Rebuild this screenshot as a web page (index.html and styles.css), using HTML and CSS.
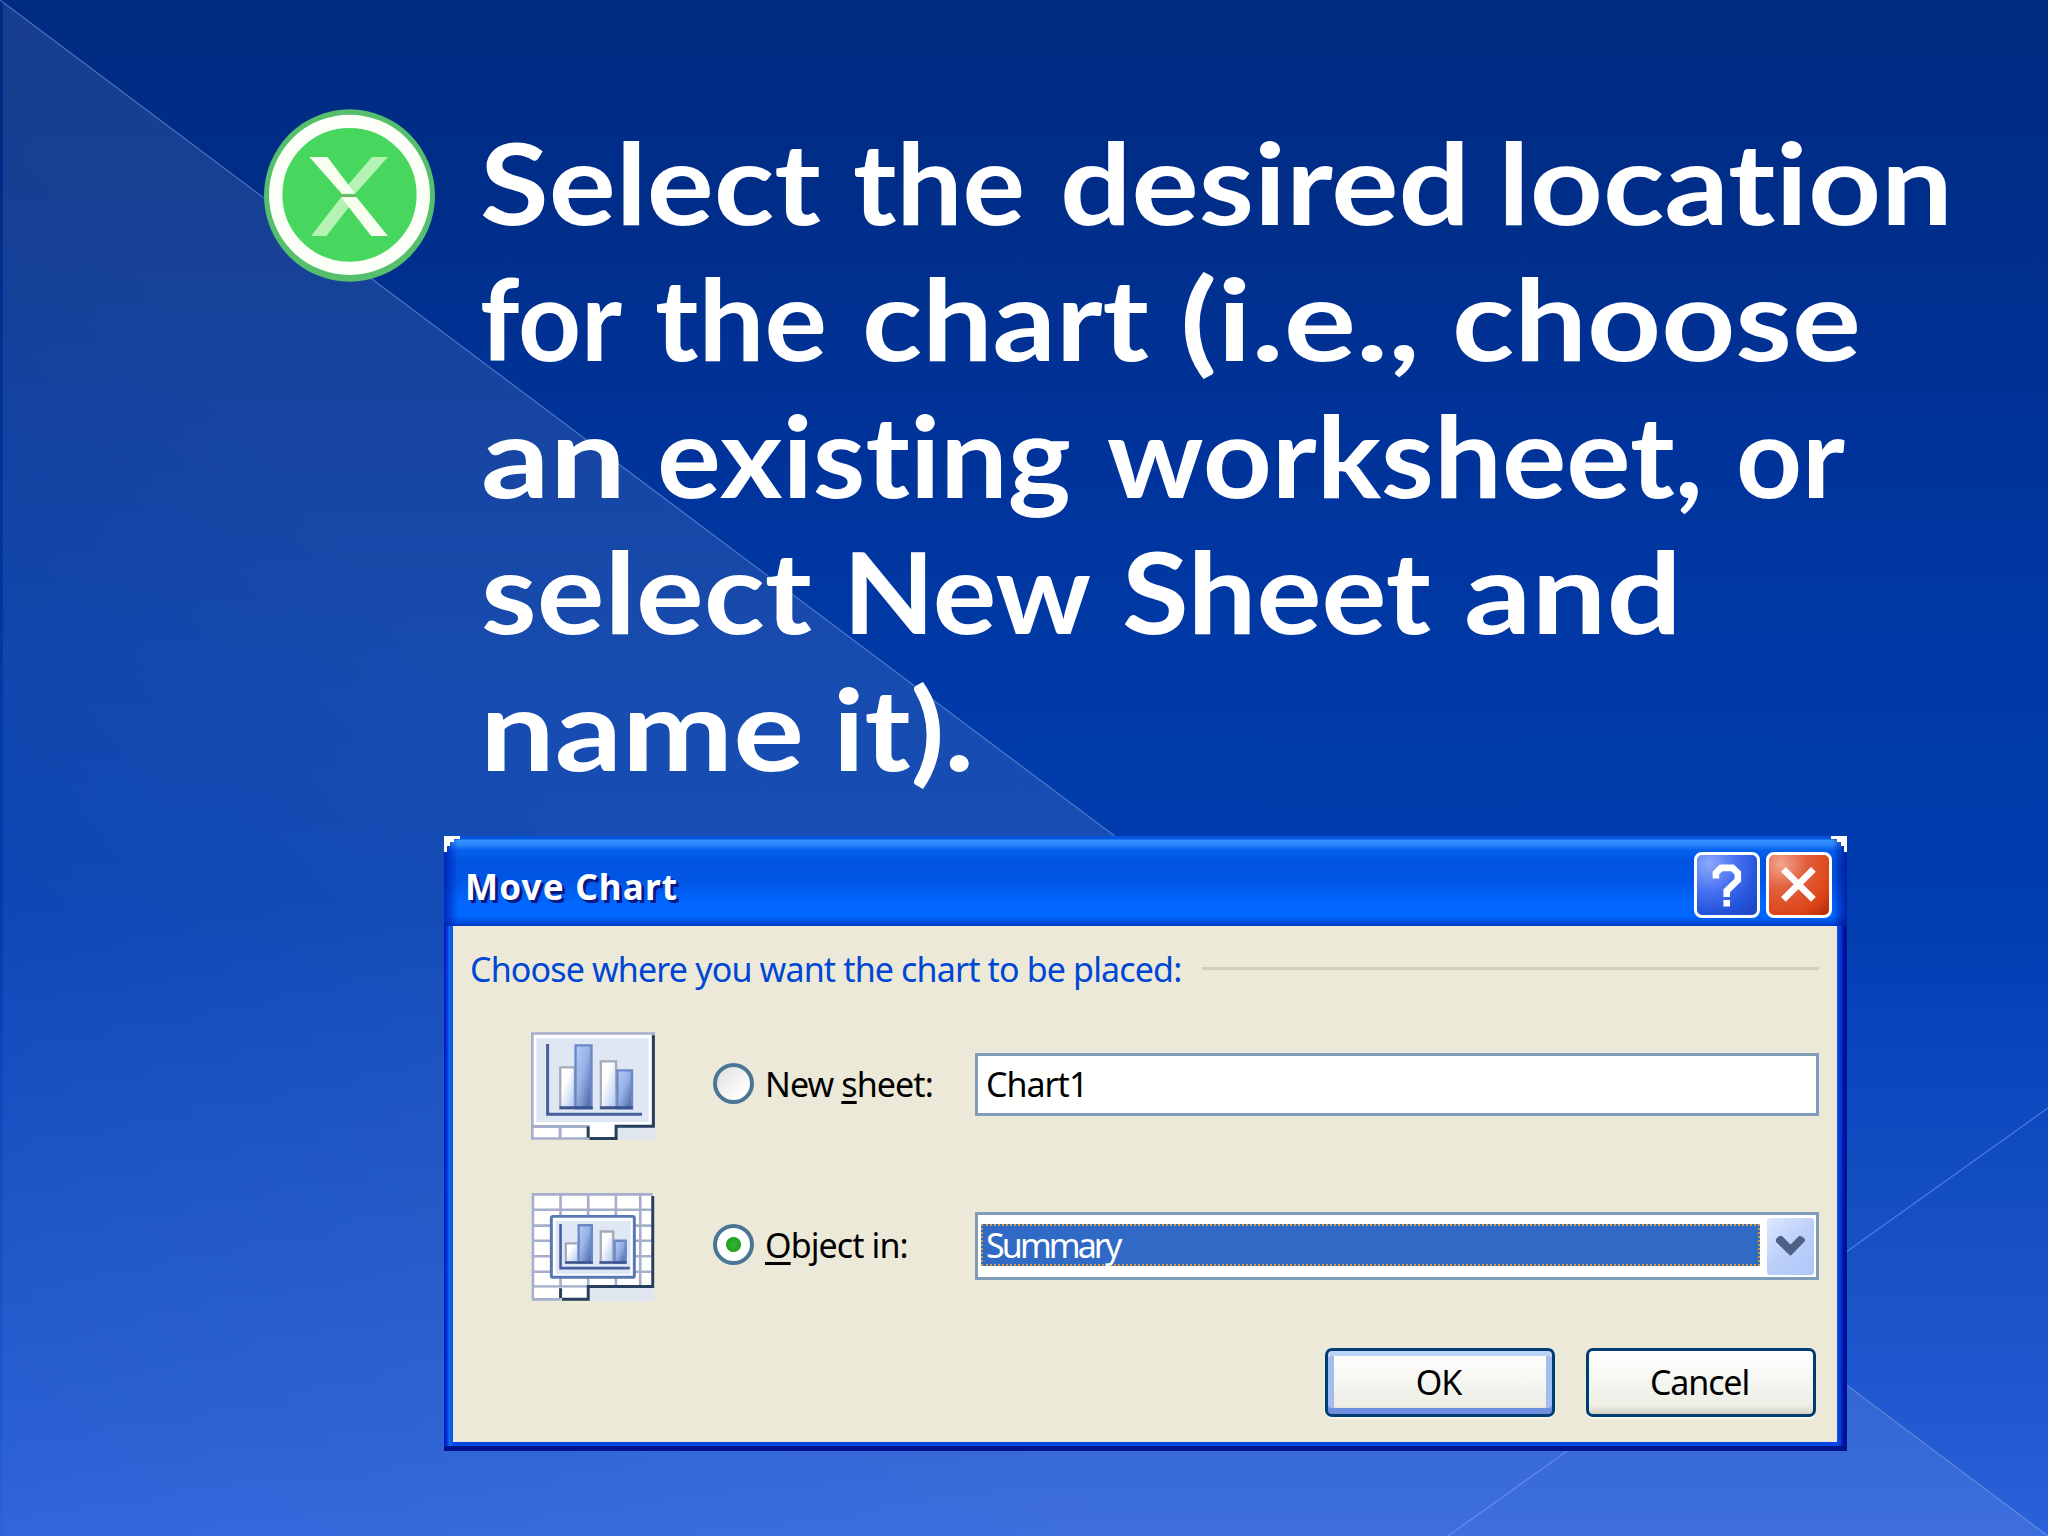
FILE: index.html
```
<!DOCTYPE html>
<html lang="en">
<head>
  <meta charset="UTF-8">
  <title>Move Chart</title>
  <link rel="stylesheet" href="styles.css">
</head>
<body>
  <div class="slide">
    <!-- Background shapes -->
    <svg class="backdrop" viewBox="0 0 2048 1536">
      <defs>
        <linearGradient id="shade" gradientUnits="userSpaceOnUse" x1="0" y1="1536" x2="700" y2="1000">
          <stop offset="0" stop-color="#fff" stop-opacity=".03"/>
          <stop offset="1" stop-color="#fff" stop-opacity=".09"/>
        </linearGradient>
      </defs>
      <path d="M3 2L2048 1536H3z" fill="url(#shade)"/>
      <path d="M0 0L2048 1536M2048 1108L1448 1536" fill="none" stroke="#8db4f5" stroke-opacity=".45" stroke-width="1.3"/>
    </svg>

    <div class="intro">
      <svg class="bullet" viewBox="72 58 512 518">
        <ellipse cx="328" cy="317" rx="256" ry="258" fill="#55bf6c"/>
        <ellipse cx="328" cy="315" rx="221" ry="220" fill="#47d75f" stroke="#fbfff7" stroke-width="40"/>
        <path d="M395 202h48L345 312h-44zM303 322h46L259 438h-46z" fill="#b5f3b4"/>
        <path d="M208 202h54L345 312h-40zM303 322h46L443 438h-50z" fill="#f8fff0"/>
        <path d="M300 318h48" stroke="#7fae75" stroke-width="6"/>
      </svg>
      <h1>
        <svg class="headline" viewBox="470 100 1500 720">
          <text x="480" y="225" textLength="341" lengthAdjust="spacingAndGlyphs">Select</text>
          <text x="853" y="225" textLength="172" lengthAdjust="spacingAndGlyphs">the</text>
          <text x="1060" y="225" textLength="410" lengthAdjust="spacingAndGlyphs">desired</text>
          <text x="1498" y="225" textLength="455" lengthAdjust="spacingAndGlyphs">location</text>
          <text x="480" y="361" textLength="142" lengthAdjust="spacingAndGlyphs">for</text>
          <text x="655" y="361" textLength="172" lengthAdjust="spacingAndGlyphs">the</text>
          <text x="862" y="361" textLength="287" lengthAdjust="spacingAndGlyphs">chart</text>
          <text x="1180" y="361" textLength="240" lengthAdjust="spacingAndGlyphs">(i.e.,</text>
          <text x="1452" y="361" textLength="409" lengthAdjust="spacingAndGlyphs">choose</text>
          <text x="481" y="498" textLength="145" lengthAdjust="spacingAndGlyphs">an</text>
          <text x="657" y="498" textLength="414" lengthAdjust="spacingAndGlyphs">existing</text>
          <text x="1107" y="498" textLength="596" lengthAdjust="spacingAndGlyphs">worksheet,</text>
          <text x="1736" y="498" textLength="109" lengthAdjust="spacingAndGlyphs">or</text>
          <text x="481" y="634" textLength="331" lengthAdjust="spacingAndGlyphs">select</text>
          <text x="843" y="634" textLength="248" lengthAdjust="spacingAndGlyphs">New</text>
          <text x="1122" y="634" textLength="309" lengthAdjust="spacingAndGlyphs">Sheet</text>
          <text x="1464" y="634" textLength="218" lengthAdjust="spacingAndGlyphs">and</text>
          <text x="480" y="771" textLength="324" lengthAdjust="spacingAndGlyphs">name</text>
          <text x="833" y="771" textLength="141" lengthAdjust="spacingAndGlyphs">it).</text>
        </svg>
      </h1>
    </div>

    <!-- Dialog -->
    <div class="dialog">
      <div class="title-bar">
        <span class="title">Move Chart</span>
        <div class="title-buttons">
          <svg class="title-btn help" viewBox="0 0 20 20">
            <path d="M6.3 7.8V6L8 4.3h3.8L13.6 6v2.4L9.9 12v2" fill="none" stroke="#fff" stroke-width="2.2"/>
            <path d="M8.8 15h2.2v2.2H8.8z" fill="#fff"/>
          </svg>
          <svg class="title-btn close" viewBox="0 0 20 20">
            <path d="M4.8 4.8l10 10M14.8 4.8l-10 10" stroke="#fff" stroke-width="2.2"/>
          </svg>
        </div>
      </div>

      <div class="dialog-body">
        <div class="legend"><span class="legend-text">Choose where you want the chart to be placed:</span><i></i></div>

        <div class="option">
          <svg class="pic" viewBox="92 66 373 324">
            <defs>
              <linearGradient id="light" x1="0" y1="0" x2="1" y2="1">
                <stop offset=".35" stop-color="#fff"/><stop offset="1" stop-color="#a9c4ef"/>
              </linearGradient>
              <linearGradient id="blue" x1="0" y1="0" x2="1" y2="1">
                <stop offset="0" stop-color="#b4cafa"/><stop offset=".45" stop-color="#98b2e6"/><stop offset="1" stop-color="#42609f"/>
              </linearGradient>
            </defs>
            <path d="M92 66h373v287H92z" fill="#a5aecb"/>
            <path d="M100 74h356v271H100z" fill="#fff"/>
            <path d="M108 84h338v252H108z" fill="#e0e7f4"/>
            <path d="M92 345h175v45H92z" fill="#a5aecb"/>
            <path d="M100 354h75v28h-75zM184 354h76v28h-76z" fill="#fff"/>
            <path d="M350 353h115v37H350z" fill="#dfe6f0"/>
            <path d="M268 345h78v38h-78z" fill="#fff"/>
            <path d="M460 75v274H348v37h-80M264 350v33" fill="none" stroke="#253f5c" stroke-width="9"/>
            <path d="M142 102v211h284" fill="none" stroke="#455f9f" stroke-width="9"/>
            <path d="M180 172h44v124h-44z" fill="url(#light)" stroke="#a5a9b8" stroke-width="7"/>
            <path d="M226 106h48v190h-48z" fill="url(#blue)" stroke="#6a87c8" stroke-width="7"/>
            <path d="M302 154h46v142h-46z" fill="url(#light)" stroke="#a5a9b8" stroke-width="7"/>
            <path d="M352 181h44v115h-44z" fill="url(#blue)" stroke="#6a87c8" stroke-width="7"/>
            <path d="M178 293h100M300 293h98" stroke="#3c548e" stroke-width="8"/>
          </svg>
          <span class="radio"></span>
          <label>New <u>s</u>heet:</label>
          <div class="field"><span>Chart1</span></div>
        </div>

        <div class="option second">
          <svg class="pic" viewBox="92 549 373 328">
            <path d="M92 549h373v288H92z" fill="#fff"/>
            <path d="M92 553h369M96 549v325M180 549v284M264 549v284M348 549v284M422 549v284M92 600h364M92 648h364M92 694h364M92 741h364M92 788h364M92 833h172M92 872h88" fill="none" stroke="#a5aecb" stroke-width="8"/>
            <path d="M268 837h197v40H268z" fill="#dfe6f0"/>
            <path d="M100 837h76v31h-76zM184 837h76v31h-76z" fill="#fff"/>
            <path d="M460 558v275H264v39h-80M180 838v30" fill="none" stroke="#253f5c" stroke-width="9"/>
            <rect x="152" y="620" width="252" height="185" rx="5" fill="#fff" stroke="#5977b4" stroke-width="9"/>
            <path d="M165 633h228v162H165z" fill="#e0e7f4"/>
            <path d="M180 643v134h210" fill="none" stroke="#455f9f" stroke-width="8"/>
            <path d="M196 702h38v58h-38z" fill="url(#light)" stroke="#a5a9b8" stroke-width="7"/>
            <path d="M235 647h40v113h-40z" fill="url(#blue)" stroke="#6a87c8" stroke-width="7"/>
            <path d="M302 666h38v94h-38z" fill="url(#light)" stroke="#a5a9b8" stroke-width="7"/>
            <path d="M344 694h34v66h-34z" fill="url(#blue)" stroke="#6a87c8" stroke-width="7"/>
            <path d="M194 760h84M298 760h82" stroke="#3c548e" stroke-width="8"/>
          </svg>
          <span class="radio checked"></span>
          <label><u>O</u>bject in:</label>
          <div class="field combo">
            <span class="selected">Summary</span>
            <span class="drop">
              <svg viewBox="0 0 47 57"><path d="M9 21l3-3h3l8.500 8.500L32 18h2l4 3v2L24 37.500h-1L9 24z" fill="#4d6185"/></svg>
            </span>
          </div>
        </div>

        <div class="actions">
          <button class="btn ok">OK</button>
          <button class="btn">Cancel</button>
        </div>
      </div>
    </div>
  </div>
</body>
</html>
```
FILE: styles.css
```
* {
    box-sizing: border-box;
}

body {
    margin: 0;
    font-family: "Noto Sans", "Open Sans", sans-serif;
}

.slide {
    position: relative;
    width: 2048px;
    height: 1536px;
    overflow: hidden;
    background: linear-gradient(#002b82 0%, #002d88 12%, #003399 28%, #003aa8 45%, #003db0 59%, #0945bc 68%, #1650c4 80%, #2159d0 92%, #2b61da 100%);
}

.backdrop {
    position: absolute;
    left: 0;
    top: 0;
    width: 2048px;
    height: 1536px;
}

/* Intro text */
.intro {
    position: relative;
    display: flex;
    height: 836px;
    padding: 100px 0 0 264px;
}

.bullet {
    width: 171px;
    height: 173px;
    margin-top: 9px;
    flex: none;
}

h1 {
    margin: 0 0 0 35px;
}

.headline {
    display: block;
    width: 1500px;
    height: 720px;
    fill: #fff;
    font-family: Lato, sans-serif;
    font-size: 113px;
    font-weight: 700;
    font-variant-ligatures: none;
}

/* Dialog */
.dialog {
    position: relative;
    width: 1403px;
    height: 615px;
    margin-left: 444px;
    background: linear-gradient(90deg, #0019b8 0, #0831d9 3px, #166aee 5px, #0855dd 9px, #0855dd 1393px, #0831d9 1397px, #001290 1400px);
    border-bottom: 5px solid #00138c;
}

.dialog::before,
.dialog::after {
    content: "";
    position: absolute;
    top: 0;
    width: 16px;
    height: 16px;
    background: #fff;
}

.dialog::before {
    left: 0;
    clip-path: polygon(0 0, 100% 0, 100% 3px, 10px 3px, 10px 6px, 6px 6px, 6px 10px, 3px 10px, 3px 100%, 0 100%);
}

.dialog::after {
    right: 0;
    clip-path: polygon(0 0, 100% 0, 100% 100%, 13px 100%, 13px 10px, 10px 10px, 10px 6px, 6px 6px, 6px 3px, 0 3px);
}

.title-bar {
    display: flex;
    justify-content: space-between;
    height: 90px;
    padding: 16px 15px 0 21px;
    background:
        linear-gradient(90deg, #001bb0cc 0, #0030d000 14px, #0030d000 1388px, #00108ecc 1403px),
        linear-gradient(#0453dc 0, #0453dc 3px, #3593ff 4px, #2a86fb 9px, #0562ee 14px, #0054e0 25px, #0055e5 45px, #0066fd 66px, #0168ff 80px, #0050e0 86px, #003cc8 90px);
}

.title {
    padding-top: 14px;
    color: #fff;
    font-size: 35px;
    font-weight: 700;
    line-height: 42px;
    letter-spacing: 1.2px;
    text-shadow: 3px 3px 0 #0a1883;
    white-space: nowrap;
}

.title-buttons {
    display: flex;
    gap: 6px;
}

.title-btn {
    width: 66px;
    height: 66px;
    border: 3px solid #fff;
    border-radius: 8px;
}

.help { background: radial-gradient(circle at 20% 15%, #8ba9fb, #4770f0 40%, #2454dc 70%, #1c43bd); }
.close { background: radial-gradient(circle at 20% 15%, #f3a58e, #e2603f 35%, #dc4416 75%, #a82c0c); }

.dialog-body {
    height: 516px;
    margin: 0 10px 0 9px;
    padding: 20px 18px 0;
    background: #ece9d8;
    color: #000;
    font-size: 34px;
    line-height: 44px;
    white-space: nowrap;
    box-shadow: 0 3px 0 #0a45e8;
}

.legend {
    display: flex;
    align-items: center;
    gap: 19px;
    height: 44px;
    color: #0046d5;
}

.legend i {
    flex: 1;
    height: 3px;
    background: #d0d0bf;
}

.legend-text {
    width: 712px;
    margin-left: -1px;
    padding-top: 2px;
    letter-spacing: -0.85px;
}

.legend i {
    margin-left: 1px;
}

.option {
    display: flex;
    align-items: flex-start;
    height: 108px;
    margin-top: 42px;
    padding-left: 60px;
}

.option.second {
    margin-top: 53px;
}

.pic {
    flex: none;
    width: 124px;
    height: 108px;
}

.radio {
    flex: none;
    width: 41px;
    height: 41px;
    margin: 31px 11px 0 58px;
    border: 4px solid #4a7595;
    border-radius: 50%;
    background: linear-gradient(135deg, #dcdfdd, #fff 80%);
}

.radio.checked {
    background: radial-gradient(circle, #35b835 0, #21a121 7px, #fff 8px);
}

.option label {
    width: 210px;
    margin-top: 30px;
    letter-spacing: -0.9px;
}

.option u {
    text-decoration-thickness: 3px;
    text-underline-offset: 4px;
    text-decoration-skip-ink: none;
}

.field {
    display: flex;
    width: 844px;
    height: 63px;
    margin-top: 21px;
    padding: 6px 8px;
    background: #fffffd;
    border: 3px solid #7f9db9;
    letter-spacing: -1px;
}

.combo {
    height: 68px;
    margin-top: 19px;
    padding: 3px 2px 2px 3px;
    justify-content: space-between;
}

.selected {
    width: 779px;
    height: 42px;
    margin-top: 6px;
    padding-left: 3px;
    color: #fff;
    background: #316ac5;
    border: 2px dotted #d49b45;
    line-height: 39px;
    letter-spacing: -2.9px;
}

.drop {
    width: 47px;
    height: 57px;
    border-radius: 3px;
    background: linear-gradient(135deg, #dde7ff, #bcd0fb 50%, #b0c6f6);
}

.drop svg {
    display: block;
}

.actions {
    display: flex;
    justify-content: flex-end;
    gap: 31px;
    margin: 47px 3px 0 0;
}

.btn {
    width: 230px;
    height: 69px;
    padding: 0 3px 1px 0;
    border: 3px solid #003c74;
    border-radius: 7px;
    background: linear-gradient(#fff, #f3f3ee 60%, #eeeee6 86%, #d8d2c2);
    font: 34px/44px "Noto Sans", sans-serif;
    letter-spacing: -1.1px;
    color: #000;
    box-shadow: 0 2px 1px #f8f7ef;
}

.ok {
    box-shadow: inset 0 5px 0 #bcd4f6, inset 0 -6px 0 #6f8fe0, inset 6px 0 0 #a3bdf0, inset -6px 0 0 #a3bdf0, 0 2px 1px #f8f7ef;
}
```
